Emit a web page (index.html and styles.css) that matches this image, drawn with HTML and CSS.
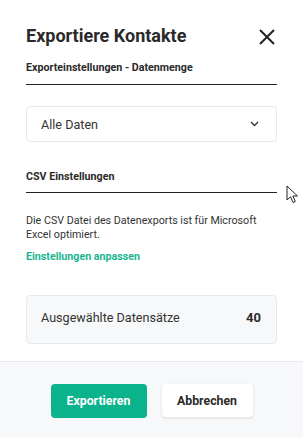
FILE: index.html
```html
<!DOCTYPE html>
<html lang="de">
<head>
<meta charset="utf-8">
<link rel="stylesheet" href="styles.css">
</head>
<body>
<div class="modal">
  <div class="body">
    <div class="head">
      <h1 class="title">Exportiere Kontakte</h1>
      <svg class="close" width="18" height="18" viewBox="0 0 18 18"><path d="M2 2L16 16M16 2L2 16" stroke="#222" stroke-width="2" fill="none"/></svg>
    </div>
    <div class="section">Exporteinstellungen - Datenmenge</div>
    <div class="select">
      <span>Alle Daten</span>
      <svg width="9" height="6" viewBox="0 0 9 6"><path d="M1 1L4.5 4.5L8 1" stroke="#333" stroke-width="1.3" fill="none"/></svg>
    </div>
    <div class="section csv">CSV Einstellungen</div>
    <p class="desc">Die CSV Datei des Datenexports ist für Microsoft Excel optimiert.</p>
    <a class="link">Einstellungen anpassen</a>
    <div class="summary">
      <span>Ausgewählte Datensätze</span>
      <strong>40</strong>
    </div>
  </div>
  <div class="footer">
    <button class="btn primary">Exportieren</button>
    <button class="btn secondary">Abbrechen</button>
  </div>
  <svg class="cursor" width="14" height="20" viewBox="0 0 14 20"><path d="M1 1L1 15L4.5 11.8L7 17.5L9.3 16.5L6.9 11L11.5 11Z" fill="#fff" stroke="#222" stroke-width="1"/></svg>
</div>
</body>
</html>
```
FILE: styles.css
```css
html, body {
  margin: 0;
  padding: 0;
  background: #fff;
}
body {
  font-family: Roboto, "Liberation Sans", sans-serif;
  color: #2b2b2b;
}
.modal {
  position: relative;
  width: 303px;
  height: 437px;
  display: flex;
  flex-direction: column;
  overflow: hidden;
}
.body {
  padding: 24px 26px 0 26px;
  flex: 1;
}
.head {
  display: flex;
  justify-content: space-between;
  align-items: center;
  height: 24px;
}
.title {
  margin: 0;
  font-size: 18px;
  line-height: 24px;
  font-weight: 700;
  color: #2a2a2a;
}
.close {
  margin-right: 1px;
  margin-top: 1px;
}
.section {
  margin-top: 12px;
  font-size: 10.7px;
  line-height: 16px;
  font-weight: 700;
  color: #2a2a2a;
  padding-bottom: 8px;
  border-bottom: 1px solid #222;
}
.select {
  margin-top: 21px;
  height: 34px;
  border: 1px solid #e6e8eb;
  border-radius: 4px;
  display: flex;
  align-items: center;
  justify-content: space-between;
  padding: 0 17px 0 14px;
  font-size: 12.6px;
  color: #333;
}
.section.csv {
  margin-top: 27px;
  padding-bottom: 7px;
}
.desc {
  margin: 21px 0 0 0;
  font-size: 10.7px;
  line-height: 14px;
  color: #333;
}
.link {
  display: block;
  margin-top: 8px;
  font-size: 10.7px;
  line-height: 14px;
  font-weight: 700;
  color: #1ab592;
}
.summary {
  margin-top: 31px;
  height: 42px;
  border: 1px solid #e6e8eb;
  border-radius: 4px;
  background: #f7f8fa;
  display: flex;
  align-items: center;
  justify-content: space-between;
  padding: 0 15px 5px 14px;
  font-size: 12.6px;
  color: #333;
}
.summary strong {
  font-weight: 700;
  font-size: 13px;
  color: #2a2a2a;
}
.footer {
  border-top: 1px solid #e8eaed;
  background: #f7f8fa;
  display: flex;
  justify-content: center;
  align-items: flex-start;
  gap: 15px;
  padding-top: 22px;
  box-sizing: border-box;
  height: 76px;
}
.btn {
  font-family: Roboto, "Liberation Sans", sans-serif;
  font-size: 12.3px;
  font-weight: 700;
  height: 34px;
  border-radius: 4px;
  border: none;
  cursor: pointer;
}
.primary {
  width: 96px;
  background: #0ab38b;
  color: #fff;
}
.secondary {
  width: 91px;
  height: 33px;
  background: #fff;
  color: #2a2a2a;
  box-shadow: 0 1px 3px rgba(0,0,0,0.12);
}
.cursor {
  position: absolute;
  left: 286px;
  top: 185px;
}
```
